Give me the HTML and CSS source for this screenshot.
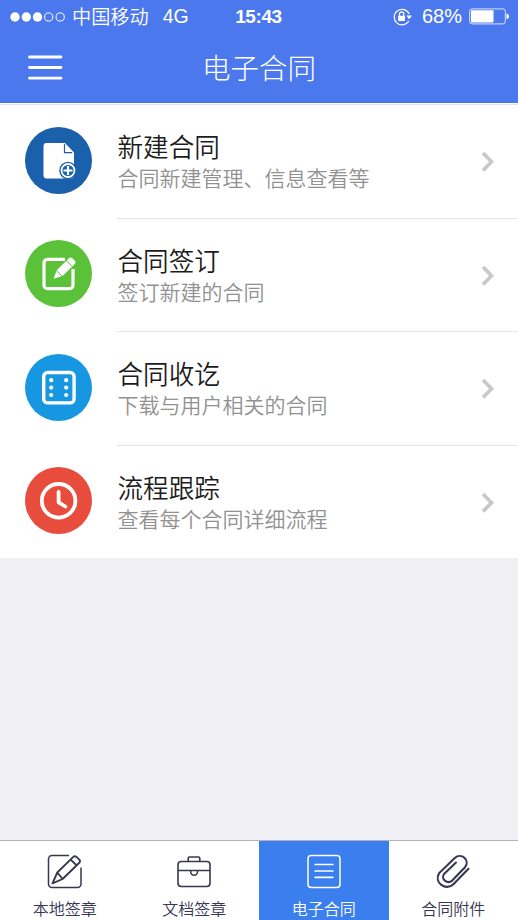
FILE: index.html
```html
<!DOCTYPE html>
<html lang="zh-CN">
<head>
<meta charset="utf-8">
<title>电子合同</title>
<link rel="stylesheet" href="styles.css">
</head>
<body>
<div class="app">
  <header class="header">
    <div class="status">
      <div class="status-left">
        <svg class="signal" width="56" height="12" viewBox="0 0 56 12">
          <g fill="#fff"><circle cx="5" cy="6" r="4.7"/><circle cx="16.3" cy="6" r="4.7"/><circle cx="27.5" cy="6" r="4.7"/></g>
          <g fill="none" stroke="#fff"><circle cx="38.7" cy="6" r="4.1"/><circle cx="50.2" cy="6" r="4.1"/></g>
        </svg>
        <span class="carrier">中国移动</span>
        <span class="network">4G</span>
      </div>
      <span class="time">15:43</span>
      <div class="status-right">
        <svg class="lock" width="20" height="18" viewBox="0 0 20 18">
          <path d="M15.8 13A7.8 7.8 0 1 1 16.2 6" fill="none" stroke="#fff" stroke-width="1.2"/>
          <path d="M13.4 7.400h5.600l-2.800 3.800z" fill="#fff"/>
          <rect x="5.200" y="7.800" width="6.800" height="5.200" rx=".6" fill="#fff"/>
          <path d="M6.500 8V6a2.100 2.100 0 0 1 4.200 0v2" fill="none" stroke="#fff" stroke-width="1.200"/>
        </svg>
        <span class="percent">68%</span>
        <svg class="battery" width="41" height="17" viewBox="0 0 41 17">
          <rect x=".7" y=".9" width="35.600" height="15" rx="2.500" fill="none" stroke="#fff" stroke-opacity=".8"/>
          <rect x="2" y="2.300" width="22.500" height="12.200" rx="1" fill="#fff"/>
          <path d="M37.500 5.600q2.600.6 2.600 2.800t-2.600 2.800z" fill="#fff"/>
        </svg>
      </div>
    </div>
    <div class="nav">
      <svg class="menu" width="37" height="28" viewBox="0 0 37 28">
        <path d="M2.500 3H34M2.500 13.500H34M2.500 24.200H34" stroke="#fff" stroke-width="2.800" stroke-linecap="round"/>
      </svg>
      <h1 class="title">电子合同</h1>
    </div>
  </header>

  <main class="list">
    <div class="row">
      <svg class="badge" viewBox="0 0 67 67">
        <circle cx="33.500" cy="33.500" r="33.500" fill="#1a60ab"/>
        <path d="M21.500 16H40l9 9.500V48.500a3 3 0 0 1-3 3H21.500a3 3 0 0 1-3-3V19a3 3 0 0 1 3-3z" fill="#fff"/>
        <path d="M39.500 17v8.700h7.700" fill="none" stroke="#1a60ab" stroke-width="1.200"/>
        <circle cx="43" cy="43.500" r="8.800" fill="#1a60ab"/>
        <circle cx="43" cy="43.500" r="6.500" fill="none" stroke="#fff" stroke-width="1.800"/>
        <path d="M38.500 43.500h9M43 39v9" stroke="#fff" stroke-width="2.200"/>
      </svg>
      <div class="cell">
        <div class="copy"><h2>新建合同</h2><p>合同新建管理、信息查看等</p></div>
        <svg class="chevron" viewBox="0 0 14 22"><path d="M2 2l8.500 8.700L2 19.400" fill="none" stroke="#c7c7cc" stroke-width="3.600"/></svg>
      </div>
    </div>
    <div class="row">
      <svg class="badge" viewBox="0 0 67 67">
        <circle cx="33.500" cy="33.500" r="33.500" fill="#5bc138"/>
        <path d="M40 19.300H22.500a3.500 3.500 0 0 0-3.500 3.500v22.400a3.500 3.500 0 0 0 3.500 3.500h22a3.500 3.500 0 0 0 3.500-3.500V29" fill="none" stroke="#fff" stroke-width="3.200"/>
        <path d="M28.500 38.700l3.300-8.600 12.200-11.900q1.600-1.300 3.200 0l2.700 2.600q1.400 1.500 0 3.200L37.500 36z" fill="#fff" stroke="#5bc138" stroke-width="1.600" paint-order="stroke"/>
        <path d="M31.400 30.600l5.600 5.500M41.300 20.600l5.800 5.700" stroke="#5bc138"/>
      </svg>
      <div class="cell">
        <div class="copy"><h2>合同签订</h2><p>签订新建的合同</p></div>
        <svg class="chevron" viewBox="0 0 14 22"><path d="M2 2l8.500 8.700L2 19.400" fill="none" stroke="#c7c7cc" stroke-width="3.600"/></svg>
      </div>
    </div>
    <div class="row">
      <svg class="badge" viewBox="0 0 67 67">
        <circle cx="33.500" cy="33.500" r="33.500" fill="#1797e2"/>
        <rect x="18.700" y="18.500" width="30.400" height="30.400" rx="4" fill="none" stroke="#fff" stroke-width="3.400"/>
        <g fill="#fff"><circle cx="26.200" cy="26.200" r="2.100"/><circle cx="26.200" cy="33.600" r="2.100"/><circle cx="26.200" cy="41" r="2.100"/><circle cx="41.200" cy="26.200" r="2.100"/><circle cx="41.200" cy="33.600" r="2.100"/><circle cx="41.200" cy="41" r="2.100"/></g>
      </svg>
      <div class="cell">
        <div class="copy"><h2>合同收讫</h2><p>下载与用户相关的合同</p></div>
        <svg class="chevron" viewBox="0 0 14 22"><path d="M2 2l8.500 8.700L2 19.400" fill="none" stroke="#c7c7cc" stroke-width="3.600"/></svg>
      </div>
    </div>
    <div class="row">
      <svg class="badge" viewBox="0 0 67 67">
        <circle cx="33.500" cy="33.500" r="33.500" fill="#e84c3d"/>
        <g fill="none" stroke="#fff" stroke-width="3.800"><circle cx="33.600" cy="33.800" r="16.800"/><path d="M33.600 25v10.300l6.800 4.200" stroke-linecap="round" stroke-linejoin="round"/></g>
      </svg>
      <div class="cell">
        <div class="copy"><h2>流程跟踪</h2><p>查看每个合同详细流程</p></div>
        <svg class="chevron" viewBox="0 0 14 22"><path d="M2 2l8.500 8.700L2 19.400" fill="none" stroke="#c7c7cc" stroke-width="3.600"/></svg>
      </div>
    </div>
  </main>

  <nav class="tabs">
    <a class="tab">
      <svg viewBox="0 0 36 36" fill="none" stroke="#383752" stroke-width="1.500">
        <path d="M22 2.500H5a3.500 3.500 0 0 0-3.500 3.500v25A3.500 3.500 0 0 0 5 34.500h25.500a3.500 3.500 0 0 0 3.500-3.500V14.500"/>
        <path d="M5.500 30.300L10.300 19.500 26.300 3.900q1.500-1.300 3.200 0l2.800 2.700q1.400 1.500 0 3.200L15.600 26zM10.300 19.500l5.300 6.500M23.600 6.600l6.200 5.900" stroke-linejoin="round" stroke-width="1.900"/>
      </svg>
      <span>本地签章</span>
    </a>
    <a class="tab">
      <svg viewBox="0 0 36 36" fill="none" stroke="#383752" stroke-width="1.600">
        <rect x="2" y="8.500" width="32" height="25" rx="3.200"/>
        <path d="M12.200 8V5.200Q12.200 4 13.500 4h9q1.300 0 1.300 1.200V8M2 17.500h32M14.700 17.500v1.300a3.400 3.400 0 0 0 6.800 0v-1.300"/>
      </svg>
      <span>文档签章</span>
    </a>
    <a class="tab active">
      <svg viewBox="0 0 36 36" fill="none" stroke="#fff" stroke-width="1.500">
        <rect x="2" y="2.500" width="32" height="32" rx="3.200"/>
        <path d="M9.200 11.500h17.600M9.200 18h17.600M9.200 24.300h17.600" stroke-linecap="round" stroke-width="1.700"/>
      </svg>
      <span>电子合同</span>
    </a>
    <a class="tab">
      <svg viewBox="0 0 36 36" fill="none" stroke="#383752" stroke-width="2.100" stroke-linecap="round">
        <path d="M33.500 15.800L18.400 31.200C11 38.500-1.700 29.500 4.200 20.100L19.500 5.200C26.500-1.200 35.500 7.600 30 14.300L17.200 27.600C12.500 31.600 5 26 9.300 20.700L21 9.500"/>
      </svg>
      <span>合同附件</span>
    </a>
  </nav>
</div>
</body>
</html>
```
FILE: styles.css
```css
* { box-sizing: border-box; margin: 0; padding: 0; }
body {
  font-family: "Noto Sans CJK SC", sans-serif;
  font-weight: 350;
  background: #efeff4;
}
svg { display: block; flex: none; }
.app { width: 518px; height: 920px; display: flex; flex-direction: column; overflow: hidden; }

.header { height: 105px; background: #4c78ed; color: #fff; border-bottom: 1px solid #e2e3ea; box-shadow: inset 0 -1px #fff; flex: none; }
.status { height: 33px; display: grid; grid-template-columns: 1fr auto 1fr; align-items: center; padding: 0 8px 0 10px; line-height: 33px; }
.status-left, .status-right { display: flex; align-items: center; }
.status-right { justify-content: flex-end; }
.carrier { font-size: 19.2px; margin-left: 6px; }
.network { font-family: "Liberation Sans", sans-serif; font-size: 19.5px; margin-left: 14px; }
.time { font-family: "Liberation Sans", sans-serif; font-size: 19px; font-weight: 700; letter-spacing: -.4px; margin-right: 3px; }
.percent { font-family: "Liberation Sans", sans-serif; font-size: 20px; margin: 0 7px 0 9px; }
.nav { height: 70px; display: grid; grid-template-columns: 90px 1fr 90px; align-items: center; }
.menu { margin-left: 27px; }
.title { font-size: 28.5px; font-weight: 300; line-height: 40px; text-align: center; padding-bottom: 2px; }

.list { background: #fff; padding-top: 0.5px; height: 453px; flex: none; }
.row { height: 113.4px; display: flex; padding-left: 25px; }
.badge { width: 67px; height: 67px; margin-top: 21.5px; }
.cell { flex: 1; display: flex; align-items: center; justify-content: space-between; margin-left: 25px; padding-right: 23.5px; border-bottom: 1px solid #e6e6e8; }
.row:last-child .cell { border-bottom: 0; }
.copy { padding: 0 0 1px 0.5px; }
.copy h2 { font-size: 25.6px; font-weight: 350; line-height: 32px; color: #1c1c1c; }
.copy p { font-size: 21px; line-height: 30px; color: #919191; }
.chevron { width: 14px; height: 22px; margin-top: 1px; }

.tabs { margin-top: auto; height: 80px; display: grid; grid-template-columns: repeat(4, 1fr); background: #fff; border-top: 1px solid #b4b4b8; flex: none; }
.tab { display: flex; flex-direction: column; align-items: center; padding-top: 12px; color: #383752; }
.tab svg { width: 36px; height: 36px; }
.tab span { font-size: 16px; line-height: 24px; margin-top: 7px; }
.tab.active { background: #3b7eed; color: #fff; }
```
